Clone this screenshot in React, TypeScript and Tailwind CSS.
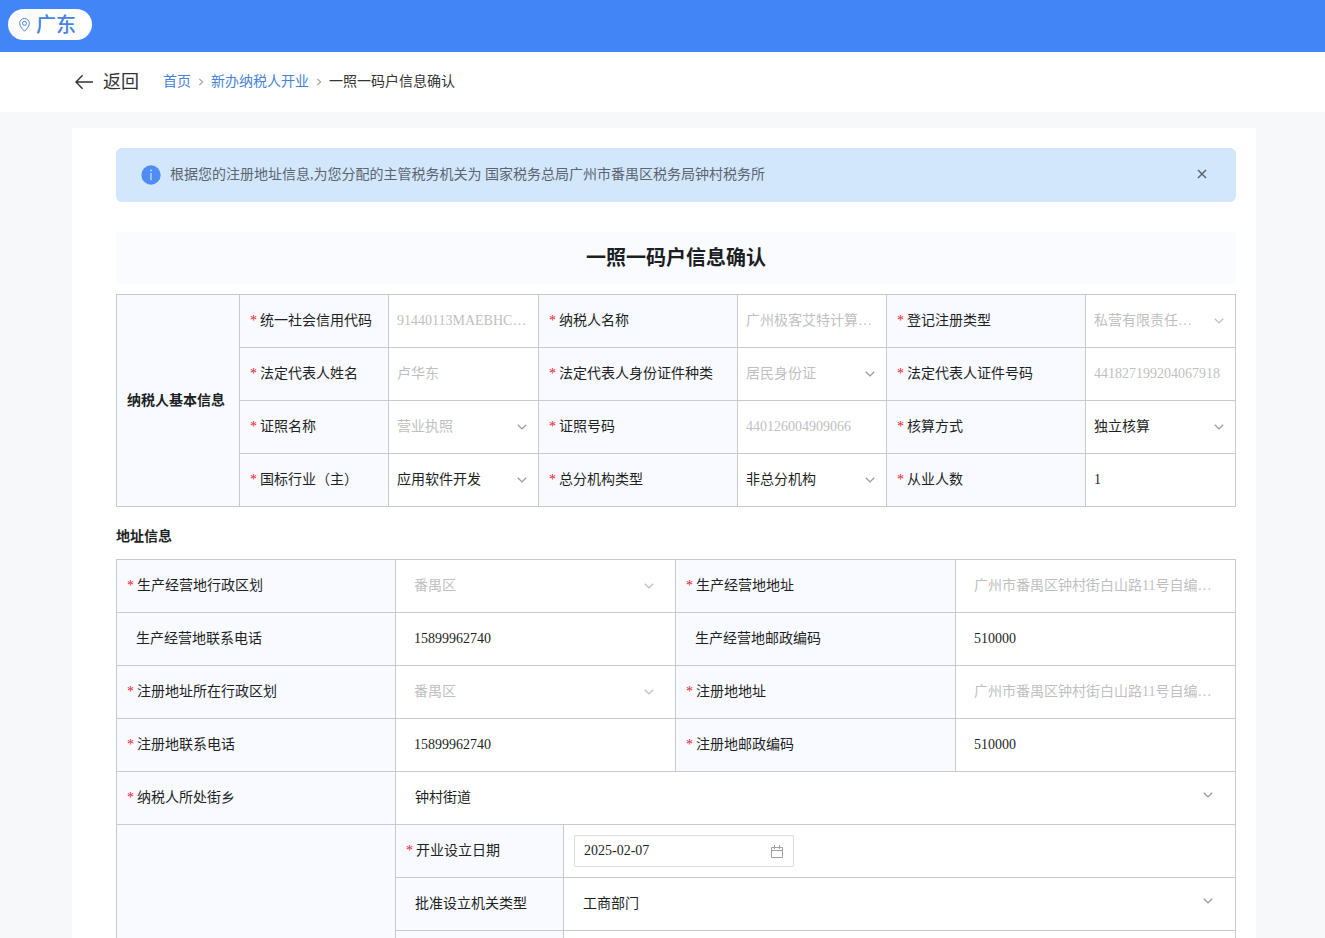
import { useId, type ReactNode } from 'react';

const fieldText =
  'text-sm leading-5 bg-transparent outline-none w-full min-w-0 text-ellipsis text-[#1c1f23] disabled:text-[#bfbfbf] disabled:opacity-100';

function Chevron({ className }: { className: string }) {
  return (
    <svg
      className={'pointer-events-none absolute h-[6px] w-[10px] ' + className}
      viewBox="0 0 10 6"
      fill="none"
      strokeWidth="1.3"
      aria-hidden="true"
    >
      <path d="M0.8 0.7 5 4.9 9.2 0.7" />
    </svg>
  );
}

type FieldProps = {
  label: string;
  value: string;
  required?: boolean;
  select?: boolean;
  disabled?: boolean;
  faint?: boolean;
  wide?: boolean;
  high?: boolean;
  valueSpan?: number;
  children?: (id: string) => ReactNode;
};

function Field({
  label,
  value,
  required = true,
  select,
  disabled,
  faint,
  wide,
  high,
  valueSpan = 1,
  children,
}: FieldProps) {
  const id = useId();
  const selectPad = high ? 'pl-[19px] pr-10' : wide ? 'pl-[18px] pr-10' : 'pl-2 pr-8';
  const chevronPlace = high ? 'right-[22px] top-[4px]' : wide ? 'right-[21px] top-[7px]' : 'right-[11px] top-[7px]';
  return (
    <>
      <th
        scope="row"
        className="border border-[#c8c9cc] bg-[#f9faff] p-0 pl-[10px] text-left font-normal"
      >
        <label htmlFor={id} className="flex items-center gap-[3px] text-sm leading-5 whitespace-nowrap">
          {required ? <span className="w-[7px] text-[#e5232e]">*</span> : <span className="w-[6px]" />}
          {label}
        </label>
      </th>
      <td colSpan={valueSpan} className="border border-[#c8c9cc] bg-white p-0">
        {children ? (
          children(id)
        ) : select ? (
          <div className="relative flex">
            <select
              id={id}
              disabled={disabled}
              defaultValue={value}
              className={`${fieldText} appearance-none ${selectPad}`}
            >
              <option value={value}>{value}</option>
            </select>
            <Chevron className={`${chevronPlace} ${faint ? 'stroke-[#bfbfbf]' : 'stroke-[#999999]'}`} />
          </div>
        ) : (
          <div className="flex">
            <input
              id={id}
              type="text"
              disabled={disabled}
              defaultValue={value}
              className={`${fieldText} ${wide ? 'pl-[18px] pr-5' : 'px-2'}`}
            />
          </div>
        )}
      </td>
    </>
  );
}

function Crumb() {
  return (
    <svg className="mx-[7px] h-2 w-[6px]" viewBox="0 0 6 8" fill="none" stroke="#a0a0a0" strokeWidth="1.1" aria-hidden="true">
      <path d="M1.3 0.8 4.6 4 1.3 7.2" />
    </svg>
  );
}

export default function App() {
  return (
    <div className="min-h-screen bg-[#f6f8fa] font-['Liberation_Serif','Noto_Sans_CJK_SC',serif] text-[#1c1f23]">
      <header className="flex h-[52px] items-center bg-[#4285f6] px-2 pb-[3px]">
        <button
          type="button"
          className="flex h-[31px] items-center rounded-full bg-white pr-4 pl-[11px] text-xl leading-7 font-medium text-[#4583e4]"
        >
          <svg
            className="mr-[6px] h-[14px] w-[11px]"
            viewBox="0 0 11 14"
            fill="none"
            stroke="#4583e4"
            aria-hidden="true"
          >
            <path d="M5.5 13.2C3.6 11.2 .7 8.4 .7 5.3a4.8 4.8 0 0 1 9.6 0c0 3.1-2.9 5.9-4.8 7.9Z" />
            <circle cx="5.5" cy="5.3" r="2" />
          </svg>
          广东
        </button>
      </header>

      <nav className="flex h-[60px] items-center bg-white pl-[75px] text-sm leading-5" aria-label="面包屑">
        <a href="#back" className="mr-6 flex items-center gap-[10px] text-lg leading-6 text-[#333]">
          <svg
            className="h-4 w-[18px]"
            viewBox="0 0 18 16"
            fill="none"
            stroke="#333"
            strokeWidth="1.4"
            aria-hidden="true"
          >
            <path d="M18 8H1M7.6 1.2 1 8l6.6 6.8" />
          </svg>
          返回
        </a>
        <a href="#home" className="text-[#4583d8]">首页</a>
        <Crumb />
        <a href="#open" className="text-[#4583d8]">新办纳税人开业</a>
        <Crumb />
        <span className="text-[#333]">一照一码户信息确认</span>
      </nav>

      <main className="mt-4 mr-[69px] ml-[72px] bg-white pt-5 pr-5 pb-10 pl-11">
        <div
          role="status"
          className="flex h-[54px] items-center rounded-md bg-[#d2e7fc] pr-[29px] pl-[25px] text-sm leading-5 text-[#5b6470]"
        >
          <svg className="mr-[9px] h-5 w-5" viewBox="0 0 20 20" aria-hidden="true">
            <circle cx="10" cy="10" r="9.7" fill="#4e8df5" />
            <circle cx="10" cy="5.4" r="0.9" fill="#d2e7fc" />
            <path d="M10 8v7.2" stroke="#d2e7fc" strokeWidth="1.2" />
          </svg>
          <p className="flex-1">
            根据您的注册地址信息,为您分配的主管税务机关为 国家税务总局广州市番禺区税务局钟村税务所
          </p>
          <button type="button" aria-label="关闭" className="pb-[2px]">
            <svg
              className="h-[10px] w-[10px]"
              viewBox="0 0 10 10"
              stroke="#5b6470"
              strokeWidth="1.5"
              aria-hidden="true"
            >
              <path d="m1 1 8 8M9 1 1 9" />
            </svg>
          </button>
        </div>

        <h1 className="mt-[30px] mb-[10px] flex h-[52px] items-center justify-center bg-[#fafbfe] text-xl leading-7 font-bold">
          一照一码户信息确认
        </h1>

        <table className="w-full table-fixed border-collapse">
          <colgroup>
            <col className="w-[123px]" />
            <col className="w-[149px]" />
            <col className="w-[150px]" />
            <col className="w-[199px]" />
            <col className="w-[149px]" />
            <col className="w-[199px]" />
            <col className="w-[150px]" />
          </colgroup>
          <tbody>
            <tr className="h-[53px]">
              <th
                rowSpan={4}
                scope="rowgroup"
                className="border border-[#c8c9cc] bg-[#f9faff] p-0 pl-[10px] text-left text-sm font-bold"
              >
                纳税人基本信息
              </th>
              <Field label="统一社会信用代码" value="91440113MAEBHC…" disabled />
              <Field label="纳税人名称" value="广州极客艾特计算…" disabled />
              <Field label="登记注册类型" value="私营有限责任…" select disabled faint />
            </tr>
            <tr className="h-[53px]">
              <Field label="法定代表人姓名" value="卢华东" disabled />
              <Field label="法定代表人身份证件种类" value="居民身份证" select disabled />
              <Field label="法定代表人证件号码" value="441827199204067918" disabled />
            </tr>
            <tr className="h-[53px]">
              <Field label="证照名称" value="营业执照" select disabled />
              <Field label="证照号码" value="440126004909066" disabled />
              <Field label="核算方式" value="独立核算" select />
            </tr>
            <tr className="h-[53px]">
              <Field label="国标行业（主）" value="应用软件开发" select />
              <Field label="总分机构类型" value="非总分机构" select />
              <Field label="从业人数" value="1" />
            </tr>
          </tbody>
        </table>

        <h2 className="mt-5 mb-3 text-sm leading-5 font-bold">地址信息</h2>

        <table className="w-full table-fixed border-collapse">
          <colgroup>
            <col className="w-[279px]" />
            <col className="w-[168px]" />
            <col className="w-[112px]" />
            <col className="w-[280px]" />
            <col className="w-[280px]" />
          </colgroup>
          <tbody>
            <tr className="h-[53px]">
              <Field label="生产经营地行政区划" value="番禺区" select disabled faint wide valueSpan={2} />
              <Field label="生产经营地地址" value="广州市番禺区钟村街白山路11号自编…" disabled wide />
            </tr>
            <tr className="h-[53px]">
              <Field label="生产经营地联系电话" value="15899962740" required={false} wide valueSpan={2} />
              <Field label="生产经营地邮政编码" value="510000" required={false} wide />
            </tr>
            <tr className="h-[53px]">
              <Field label="注册地址所在行政区划" value="番禺区" select disabled faint wide valueSpan={2} />
              <Field label="注册地地址" value="广州市番禺区钟村街白山路11号自编…" disabled wide />
            </tr>
            <tr className="h-[53px]">
              <Field label="注册地联系电话" value="15899962740" wide valueSpan={2} />
              <Field label="注册地邮政编码" value="510000" wide />
            </tr>
            <tr className="h-[53px]">
              <Field label="纳税人所处街乡" value="钟村街道" select wide high valueSpan={4} />
            </tr>
            <tr className="h-[53px]">
              <td rowSpan={3} className="border border-[#c8c9cc] bg-[#f9faff]" />
              <Field label="开业设立日期" value="2025-02-07" valueSpan={3}>
                {(id) => (
                  <div className="ml-[10px] flex h-8 w-[220px] items-center rounded-xs border border-[#dcdcdc] pr-[10px] pl-[9px]">
                    <input id={id} type="text" defaultValue="2025-02-07" className={fieldText} />
                    <svg
                      className="h-[13px] w-3 shrink-0"
                      viewBox="0 0 12 13"
                      fill="none"
                      stroke="#a0a0a0"
                      aria-hidden="true"
                    >
                      <path d="M0.5 2.5h11v10H0.5zM0.5 5.5h11M3.5 0v4M8.5 0v4" />
                    </svg>
                  </div>
                )}
              </Field>
            </tr>
            <tr className="h-[53px]">
              <Field label="批准设立机关类型" value="工商部门" required={false} select wide high valueSpan={3} />
            </tr>
            <tr className="h-[53px]">
              <td className="border border-[#c8c9cc] bg-[#f9faff]" />
              <td colSpan={3} className="border border-[#c8c9cc] bg-white" />
            </tr>
          </tbody>
        </table>
      </main>
    </div>
  );
}
